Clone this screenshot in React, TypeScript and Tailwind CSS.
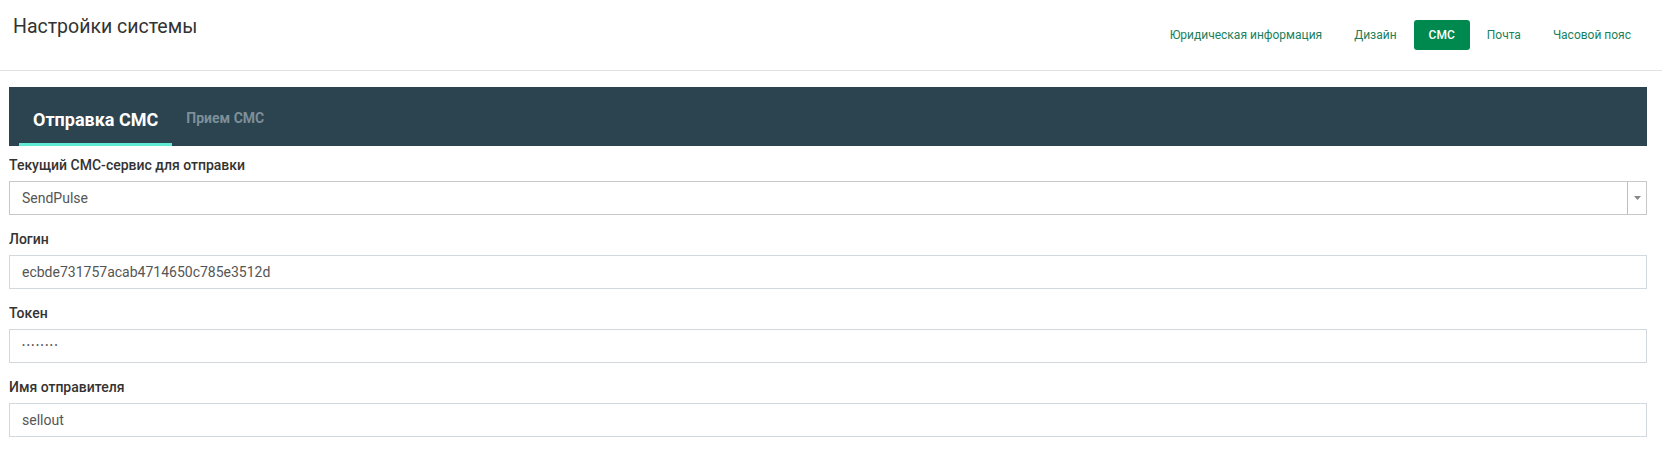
import React from "react";

const navItems = [
  { label: "Юридическая информация", active: false },
  { label: "Дизайн", active: false },
  { label: "СМС", active: true },
  { label: "Почта", active: false },
  { label: "Часовой пояс", active: false },
];

const Field = ({ label, children }: { label: string; children: React.ReactNode }) => (
  <div className="flex flex-col">
    <label className="text-[14px] leading-[20px] font-medium text-[#333]">{label}</label>
    <div className="mt-[6px]">{children}</div>
  </div>
);

const TextInput = ({ value }: { value: React.ReactNode }) => (
  <div className="h-[34px] border border-[#d3d8de] px-3 flex items-center text-[14px] text-[#555]">
    {value}
  </div>
);

export default function App() {
  return (
    <div className="w-[1662px] h-[456px] bg-white overflow-hidden font-['Roboto',sans-serif]">
      {/* Header */}
      <div className="flex justify-between h-[70px] pl-[13px] pr-4">
        <h1 className="text-[19.5px] leading-[28px] pt-[13px] text-[#333]">Настройки системы</h1>
        <nav className="flex gap-[2px] pt-5 items-start">
          {navItems.map((item) => (
            <a
              key={item.label}
              className={
                item.active
                  ? "h-[30px] px-[15px] flex items-center rounded-[3px] text-[12px] font-medium text-white bg-[#00894f]"
                  : "h-[30px] px-[15px] flex items-center rounded-[3px] text-[12px] text-[#1b7f5e]"
              }
            >
              {item.label}
            </a>
          ))}
        </nav>
      </div>

      {/* Card */}
      <div className="border-t border-[#e2e2e2] pt-4 pl-[9px] pr-[15px]">
        {/* Tabs */}
        <div className="h-[59px] bg-[#2c4350] flex pl-[10px]">
          <div className="px-[14px] pt-[21px] border-b-[3px] border-[#5eead4]">
            <span className="text-[18px] leading-[24px] font-bold text-white">Отправка СМС</span>
          </div>
          <div className="px-[14px] pt-[19px]">
            <span className="text-[14px] leading-[20px] font-bold text-[#7d8f98]">Прием СМС</span>
          </div>
        </div>

        {/* Form */}
        <div className="mt-[9px] flex flex-col gap-[14px]">
          <Field label="Текущий СМС-сервис для отправки">
            <div className="h-[34px] border border-[#c8c8c8] flex text-[14px] text-[#555]">
              <div className="flex-1 px-3 flex items-center">SendPulse</div>
              <div className="w-[19px] border-l border-[#bdbdbd] flex items-center justify-center">
                <svg width="7" height="4" viewBox="0 0 7 4">
                  <path d="M0 0 L7 0 L3.5 4 Z" fill="#888" />
                </svg>
              </div>
            </div>
          </Field>
          <Field label="Логин">
            <TextInput value="ecbde731757acab4714650c785e3512d" />
          </Field>
          <Field label="Токен">
            <TextInput value={<span className="text-[9px] tracking-[1.6px] text-[#555]">••••••••</span>} />
          </Field>
          <Field label="Имя отправителя">
            <TextInput value="sellout" />
          </Field>
        </div>
      </div>
    </div>
  );
}
